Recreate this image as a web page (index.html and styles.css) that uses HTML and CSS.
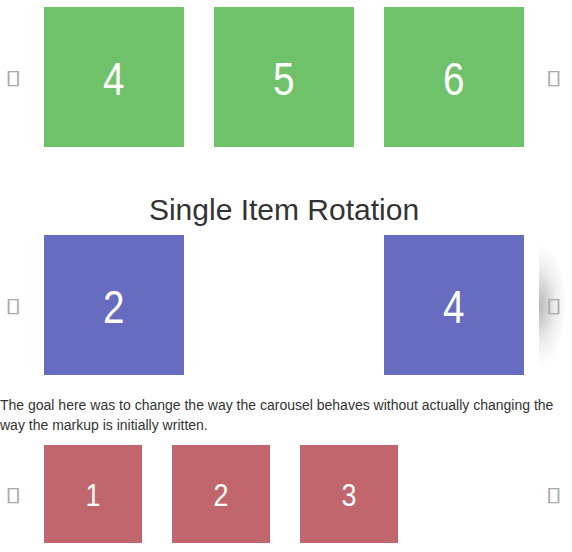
FILE: index.html
```html
<!DOCTYPE html>
<html lang="en">
<head>
  <meta charset="UTF-8" />
  <title>Carousel Demos</title>
  <link rel="stylesheet" href="styles.css">
</head>
<body>
  <div class="page">
    <div class="carousel carousel-top">
      <span class="nav prev">&#x25af;</span>
      <div class="track">
        <div class="item green"><span>4</span></div>
        <div class="item green"><span>5</span></div>
        <div class="item green"><span>6</span></div>
      </div>
      <span class="nav next">&#x25af;</span>
    </div>

    <h2 class="title">Single Item Rotation</h2>

    <div class="carousel">
      <span class="nav prev">&#x25af;</span>
      <div class="track">
        <div class="item purple"><span>2</span></div>
        <div class="item empty"><span>3</span></div>
        <div class="item purple"><span>4</span></div>
      </div>
      <div class="edge-shadow"></div>
      <span class="nav next">&#x25af;</span>
    </div>

    <p class="note">The goal here was to change the way the carousel behaves without actually changing the way the markup is initially written.</p>

    <div class="carousel carousel-small">
      <span class="nav prev">&#x25af;</span>
      <div class="track">
        <div class="item red"><span>1</span></div>
        <div class="item red"><span>2</span></div>
        <div class="item red"><span>3</span></div>
      </div>
      <span class="nav next">&#x25af;</span>
    </div>
  </div>
</body>
</html>
```

FILE: styles.css
```css
body {
  margin: 0;
  font-family: "Liberation Sans", Arial, sans-serif;
  color: #333;
  background: #fff;
}
.page {
  width: 568px;
}
.carousel {
  position: relative;
  padding: 0 44px;
  overflow: hidden;
}
.carousel-top {
  margin-top: 7px;
}
.track {
  display: flex;
  gap: 30px;
}
.item {
  width: 140px;
  height: 140px;
  display: flex;
  align-items: center;
  justify-content: center;
  color: #fff;
  font-size: 46px;
  padding-top: 3px;
  box-sizing: border-box;
}
.item span {
  display: inline-block;
  transform: scaleX(0.84);
}
.green {
  background-color: #6fc16a;
}
.purple {
  background-color: #686cc1;
}
.red {
  background-color: #c0666c;
}
.empty {
  visibility: hidden;
}
.carousel-small .item {
  width: 98px;
  height: 98px;
  font-size: 32px;
}
.nav {
  position: absolute;
  top: 50%;
  margin-top: -12px;
  font-family: "DejaVu Sans", sans-serif;
  font-size: 20px;
  line-height: 24px;
  color: #aaa;
  transform: scaleX(1.5);
}
.prev {
  left: 5px;
  transform-origin: left center;
}
.next {
  right: 6px;
  transform-origin: right center;
}
.edge-shadow {
  position: absolute;
  top: 8px;
  bottom: 8px;
  left: 539px;
  width: 40px;
  background: radial-gradient(ellipse 28px 62px at left center, rgba(0, 0, 0, 0.28), rgba(0, 0, 0, 0.07) 60%, rgba(0, 0, 0, 0) 100%);
}
.title {
  margin: 46px 0 9px;
  font-size: 30px;
  font-weight: normal;
  line-height: 33px;
  text-align: center;
}
.note {
  margin: 20px 0 10px;
  font-size: 14px;
  line-height: 20px;
}
```
